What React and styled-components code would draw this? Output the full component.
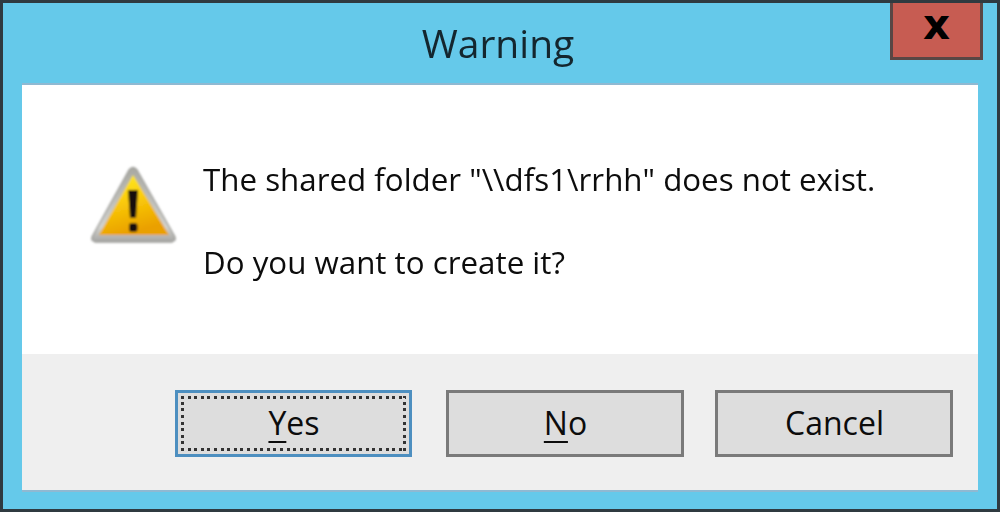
import React from 'react';
import styled, { createGlobalStyle } from 'styled-components';

const GlobalStyle = createGlobalStyle`
    html, body {
        margin: 0;
        padding: 0;
        background: #65c9ea;
    }
`

function WarningIcon() {
    return (
        <Icon viewBox="0 0 92 84" width="92" height="84">
            <defs>
                <linearGradient id="warnFill" x1="0" y1="0" x2="0.3" y2="1">
                    <stop offset="0" stopColor="#fff02e" />
                    <stop offset="0.45" stopColor="#fccf0a" />
                    <stop offset="1" stopColor="#eaa000" />
                </linearGradient>
                <linearGradient id="warnEdge" x1="0" y1="0" x2="0" y2="1">
                    <stop offset="0" stopColor="#a8a8a2" />
                    <stop offset="0.8" stopColor="#d2d2ce" />
                    <stop offset="1" stopColor="#a4a4a2" />
                </linearGradient>
                <filter id="warnSoft" x="-10%" y="-10%" width="120%" height="120%">
                    <feGaussianBlur stdDeviation="0.8" />
                </filter>
            </defs>
            <g filter="url(#warnSoft)">
                <path d="M4 76 L41 9 Q45 4 49 9 L87 76 L87 79 L84 81 L7 81 L4 79 Z" fill="url(#warnEdge)" stroke="#a0a09c" strokeWidth="1.5" strokeLinejoin="round" />
                <path d="M11 74 L45 14 L81 74 Z" fill="url(#warnFill)" />
                <path d="M40 29 L50 29 L48 57 L42 57 Z" fill="#121009" />
                <rect x="41" y="62" width="8.5" height="9" rx="3" fill="#121009" />
            </g>
        </Icon>
    );
}

function App() {
    return (
        <>
            <GlobalStyle />
            <Window>
                <TitleBar>
                    <Title>Warning</Title>
                    <CloseButton>x</CloseButton>
                </TitleBar>
                <Dialog>
                    <Message>
                        <WarningIcon />
                        <MessageText>
                            <p>The shared folder "\\dfs1\rrhh" does not exist.</p>
                            <p>Do you want to create it?</p>
                        </MessageText>
                    </Message>
                    <Footer>
                        <Button $focused><u>Y</u>es</Button>
                        <Button $left={34} $wide><u>N</u>o</Button>
                        <Button $left={31} $wide>Cancel</Button>
                    </Footer>
                </Dialog>
            </Window>
        </>
    );
}

export default App

const Window = styled.div`
    box-sizing: border-box;
    width: 1000px;
    height: 512px;
    display: flex;
    flex-direction: column;
    background: #65c9ea;
    border: 3px solid #2f3a40;
    font-family: "Open Sans", "Noto Sans", sans-serif;
    color: #0c0c0c;
`

const TitleBar = styled.div`
    position: relative;
    height: 82px;
    display: flex;
    align-items: center;
    justify-content: center;
    flex-shrink: 0;
`

const Title = styled.div`
    font-size: 39px;
    color: #14262e;
    margin: 0 4px 4px 0;
    filter: blur(0.35px);
`

const CloseButton = styled.div`
    position: absolute;
    top: 0;
    right: 14px;
    box-sizing: border-box;
    width: 93px;
    height: 57px;
    display: flex;
    align-items: center;
    justify-content: center;
    background: #c75c52;
    border: 3px solid #5a4644;
    border-top: none;
    font-family: "DejaVu Sans", sans-serif;
    font-size: 42px;
    font-weight: 700;
    line-height: 1;
    color: #000;
    padding-bottom: 10px;
`

const Dialog = styled.div`
    flex: 1;
    margin: 0 19px 19px;
    display: flex;
    flex-direction: column;
    background: #fff;
    box-shadow: 0 -2px 0 #8fb9d2, 0 2px 0 #8fb9d2;
`

const Message = styled.div`
    height: 269px;
    display: flex;
    align-items: flex-start;
`

const Icon = styled.svg`
    flex-shrink: 0;
    margin: 76px 0 0 66px;
`

const MessageText = styled.div`
    margin: 72px 0 0 23px;
    font-size: 31.3px;
    line-height: 44px;
    filter: blur(0.35px);

    p {
        margin: 0 0 39px;
        white-space: nowrap;
    }
`

const Footer = styled.div`
    flex: 1;
    display: flex;
    align-items: flex-start;
    padding: 36px 0 0 153px;
    background: #efefef;
`

const Button = styled.div`
    position: relative;
    box-sizing: border-box;
    width: ${props => props.$wide ? '238px' : '237px'};
    height: 67px;
    margin-left: ${props => props.$left || 0}px;
    display: flex;
    align-items: center;
    justify-content: center;
    background: #dddddd;
    border: 3px solid ${props => props.$focused ? '#4d8fc0' : '#7a7a7a'};
    font-size: 32px;
    padding: 0 0 3px 1px;

    u {
        text-underline-offset: 6px;
        text-decoration-thickness: 2px;
    }

    &::after {
        content: '';
        display: ${props => props.$focused ? 'block' : 'none'};
        position: absolute;
        inset: 3px;
        background:
            repeating-linear-gradient(90deg, #333 0 3px, transparent 3px 6.6px) top / 100% 3px no-repeat,
            repeating-linear-gradient(90deg, #333 0 3px, transparent 3px 6.6px) bottom / 100% 3px no-repeat,
            repeating-linear-gradient(0deg, #333 0 3px, transparent 3px 6.6px) left / 3px 100% no-repeat,
            repeating-linear-gradient(0deg, #333 0 3px, transparent 3px 6.6px) right / 3px 100% no-repeat;
    }
`
